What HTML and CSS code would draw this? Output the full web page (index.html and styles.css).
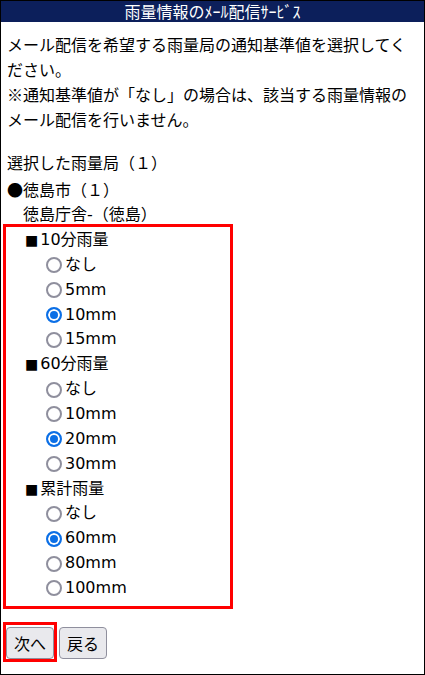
FILE: index.html
```html
<!DOCTYPE html>
<html lang="ja">
<head>
    <meta charset="UTF-8">
    <meta name="viewport" content="width=device-width, initial-scale=1.0">
    <title>雨量情報のﾒｰﾙ配信ｻｰﾋﾞｽ</title>
    <link rel="stylesheet" href="styles.css">
</head>
<body>
    <div class="page">
        <div class="header">雨量情報のﾒｰﾙ配信ｻｰﾋﾞｽ</div>

        <div class="main">
            <p class="intro">
                メール配信を希望する雨量局の通知基準値を選択してください。<br>
                ※通知基準値が「なし」の場合は、該当する雨量情報のメール配信を行いません。
            </p>

            <div class="line">選択した雨量局（１）</div>
            <div class="line"><span class="mark">●</span>徳島市（１）</div>
            <div class="line indent">徳島庁舎-（徳島）</div>

            <form class="select-box">
                <div class="group-title"><span class="sq">■</span>10分雨量</div>
                <label class="opt"><input type="radio" name="r10" value="0"><span>なし</span></label>
                <label class="opt"><input type="radio" name="r10" value="5"><span>5mm</span></label>
                <label class="opt"><input type="radio" name="r10" value="10" checked><span>10mm</span></label>
                <label class="opt"><input type="radio" name="r10" value="15"><span>15mm</span></label>

                <div class="group-title"><span class="sq">■</span>60分雨量</div>
                <label class="opt"><input type="radio" name="r60" value="0"><span>なし</span></label>
                <label class="opt"><input type="radio" name="r60" value="10"><span>10mm</span></label>
                <label class="opt"><input type="radio" name="r60" value="20" checked><span>20mm</span></label>
                <label class="opt"><input type="radio" name="r60" value="30"><span>30mm</span></label>

                <div class="group-title"><span class="sq">■</span>累計雨量</div>
                <label class="opt"><input type="radio" name="rsum" value="0"><span>なし</span></label>
                <label class="opt"><input type="radio" name="rsum" value="60" checked><span>60mm</span></label>
                <label class="opt"><input type="radio" name="rsum" value="80"><span>80mm</span></label>
                <label class="opt"><input type="radio" name="rsum" value="100"><span>100mm</span></label>
            </form>

            <div class="buttons">
                <span class="next-wrap"><button type="button">次へ</button></span>
                <button type="button">戻る</button>
            </div>
        </div>
    </div>
</body>
</html>
```

FILE: styles.css
```css
html, body {
    margin: 0;
    padding: 0;
}
body {
    font-family: "DejaVu Sans", "Noto Sans CJK JP", sans-serif;
    font-size: 16px;
    color: #000;
    background: #fff;
}
.page {
    min-height: 100vh;
    box-sizing: border-box;
    border: 1px solid #000;
}
.header {
    height: 21px;
    line-height: 21px;
    background-color: #0c1f5b;
    color: #fff;
    text-align: center;
    font-family: "Noto Sans CJK JP", sans-serif;
    font-size: 16px;
}
.main {
    padding: 10px 6px 0 6px;
}
.intro {
    margin: 0 0 20px 0;
    line-height: 25px;
    font-family: "Noto Sans CJK JP", sans-serif;
}
.line {
    line-height: 24.5px;
}
.indent {
    padding-left: 16px;
}
.mark {
    font-family: "Noto Sans CJK JP", sans-serif;
}
.select-box {
    width: 230px;
    box-sizing: border-box;
    margin: -4px 0 0 -4px;
    padding: 1.5px 0 5px 0;
    border: 3px solid #f00;
}
.group-title, .opt {
    height: 24.86px;
    line-height: 24.86px;
}
.group-title {
    padding-left: 19px;
}
.sq {
    font-size: 14px;
    margin-right: 2px;
}
.opt {
    display: flex;
    align-items: center;
    padding-left: 40px;
}
.opt input {
    appearance: none;
    -webkit-appearance: none;
    flex: none;
    width: 16px;
    height: 16px;
    margin: 0 3px 0 0;
    box-sizing: border-box;
    border: 2px solid #8f8f9d;
    border-radius: 50%;
    background: #fff;
}
.opt input:checked {
    border-color: #0b6fe6;
    background: #0b6fe6;
    box-shadow: inset 0 0 0 2px #fff;
}
.buttons {
    margin-top: 13px;
    display: flex;
    align-items: flex-start;
    margin-left: -4px;
}
.next-wrap {
    display: inline-block;
    border: 3px solid #f00;
    padding: 2px 0 0 0;
    line-height: 0;
    margin-right: 2px;
}
button {
    font-family: "Noto Sans CJK JP", sans-serif;
    font-size: 16px;
    color: #000;
    height: 32px;
    padding: 0 7px;
    margin: 0;
    line-height: 30px;
    background-color: #e9e9ed;
    border: 1px solid #8f8f9d;
    border-radius: 4px;
}
.buttons > button {
    margin-top: 5px;
}
```
